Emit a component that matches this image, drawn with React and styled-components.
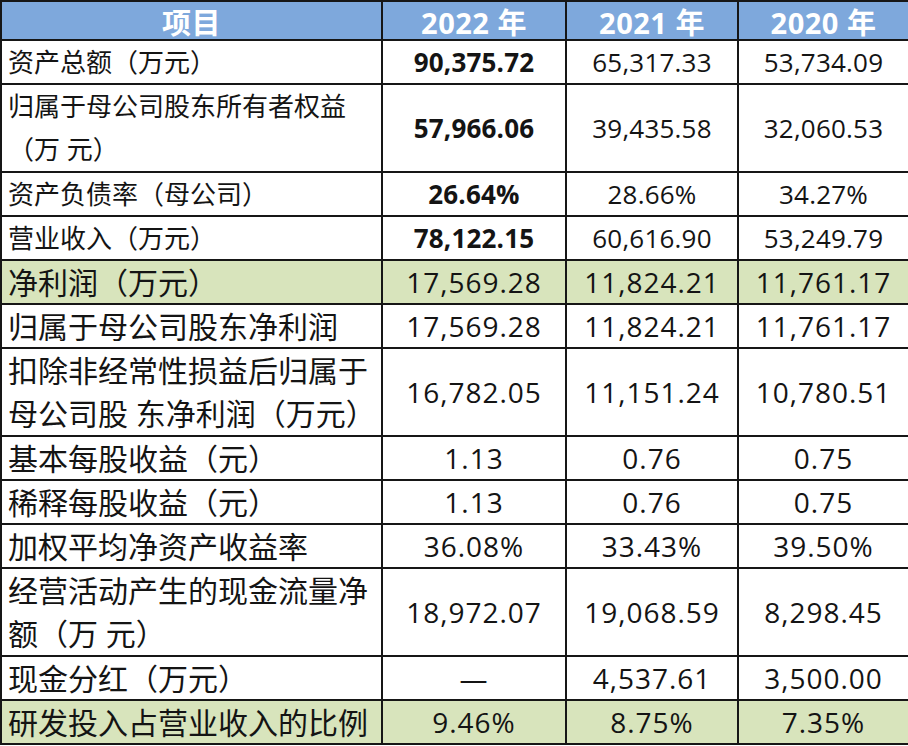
import React from 'react';
import styled, { createGlobalStyle } from 'styled-components';

// first four rows use a smaller type than the rest, as in the source sheet
const rows = [
  { label: ['资产总额（万元）'], values: ['90,375.72', '65,317.33', '53,734.09'], bold: true },
  { label: ['归属于母公司股东所有者权益', '（万 元）'], values: ['57,966.06', '39,435.58', '32,060.53'], bold: true },
  { label: ['资产负债率（母公司）'], values: ['26.64%', '28.66%', '34.27%'], bold: true },
  { label: ['营业收入（万元）'], values: ['78,122.15', '60,616.90', '53,249.79'], bold: true },
  { label: ['净利润（万元）'], values: ['17,569.28', '11,824.21', '11,761.17'], tint: true, big: true },
  { label: ['归属于母公司股东净利润'], values: ['17,569.28', '11,824.21', '11,761.17'], big: true },
  { label: ['扣除非经常性损益后归属于', '母公司股 东净利润（万元）'], values: ['16,782.05', '11,151.24', '10,780.51'], big: true },
  { label: ['基本每股收益（元）'], values: ['1.13', '0.76', '0.75'], big: true },
  { label: ['稀释每股收益（元）'], values: ['1.13', '0.76', '0.75'], big: true },
  { label: ['加权平均净资产收益率'], values: ['36.08%', '33.43%', '39.50%'], big: true },
  { label: ['经营活动产生的现金流量净', '额（万 元）'], values: ['18,972.07', '19,068.59', '8,298.45'], big: true },
  { label: ['现金分红（万元）'], values: ['—', '4,537.61', '3,500.00'], big: true },
  { label: ['研发投入占营业收入的比例'], values: ['9.46%', '8.75%', '7.35%'], tint: true, big: true },
];

const years = ['2022 年', '2021 年', '2020 年'];

const GlobalStyle = createGlobalStyle`
  html, body {
    margin: 0;
    padding: 0;
    background: #ffffff;
    overflow: hidden;
  }
  body {
    font-family: "Open Sans", "Noto Sans CJK SC", sans-serif;
    color: #141414;
  }
`;

const Sheet = styled.div`
  display: grid;
  grid-template-columns: 381px 184px 172px 171px;
  width: 910px;
  border-top: 2px solid #161616;
  border-left: 2px solid #161616;
  box-sizing: border-box;
`;

const Cell = styled.div`
  box-sizing: border-box;
  border-right: 2px solid #161616;
  border-bottom: 2px solid #161616;
  display: flex;
  align-items: center;
  height: ${p => (p.$tall ? 88 : 44)}px;
  background: ${p => (p.$tint ? '#d8e4bc' : '#ffffff')};
  font-size: 26px;
`;

const HeadCell = styled(Cell)`
  height: 39px;
  justify-content: center;
  background: #7ea8dc;
  color: #ffffff;
  font-size: 29px;
  font-weight: 700;
  letter-spacing: 0.5px;
`;

const LabelCell = styled(Cell)`
  padding-left: 6px;
  font-size: ${p => (p.$big ? 30 : 26)}px;
`;

const Lines = styled.div`
  display: flex;
  flex-direction: column;
  line-height: 43px;
  white-space: nowrap;
`;

const ValueCell = styled(Cell)`
  justify-content: center;
  font-size: ${p => (p.$big ? 28 : 26)}px;
  font-weight: ${p => (p.$bold ? 700 : 400)};
  letter-spacing: ${p => (p.$big ? 1 : 0.2)}px;
`;

export default function App() {
  return (
    <>
      <GlobalStyle />
      <Sheet>
        <HeadCell>项目</HeadCell>
        {years.map(y => (
          <HeadCell key={y}>{y}</HeadCell>
        ))}
        {rows.map(row => {
          const tall = row.label.length > 1;
          return (
            <React.Fragment key={row.label.join('')}>
              <LabelCell $tall={tall} $tint={row.tint} $big={row.big}>
                <Lines>
                  {row.label.map(line => (
                    <span key={line}>{line}</span>
                  ))}
                </Lines>
              </LabelCell>
              {row.values.map((v, i) => (
                <ValueCell
                  key={i}
                  $tall={tall}
                  $tint={row.tint}
                  $big={row.big}
                  $bold={row.bold && i === 0}
                >
                  {v}
                </ValueCell>
              ))}
            </React.Fragment>
          );
        })}
      </Sheet>
    </>
  );
}
